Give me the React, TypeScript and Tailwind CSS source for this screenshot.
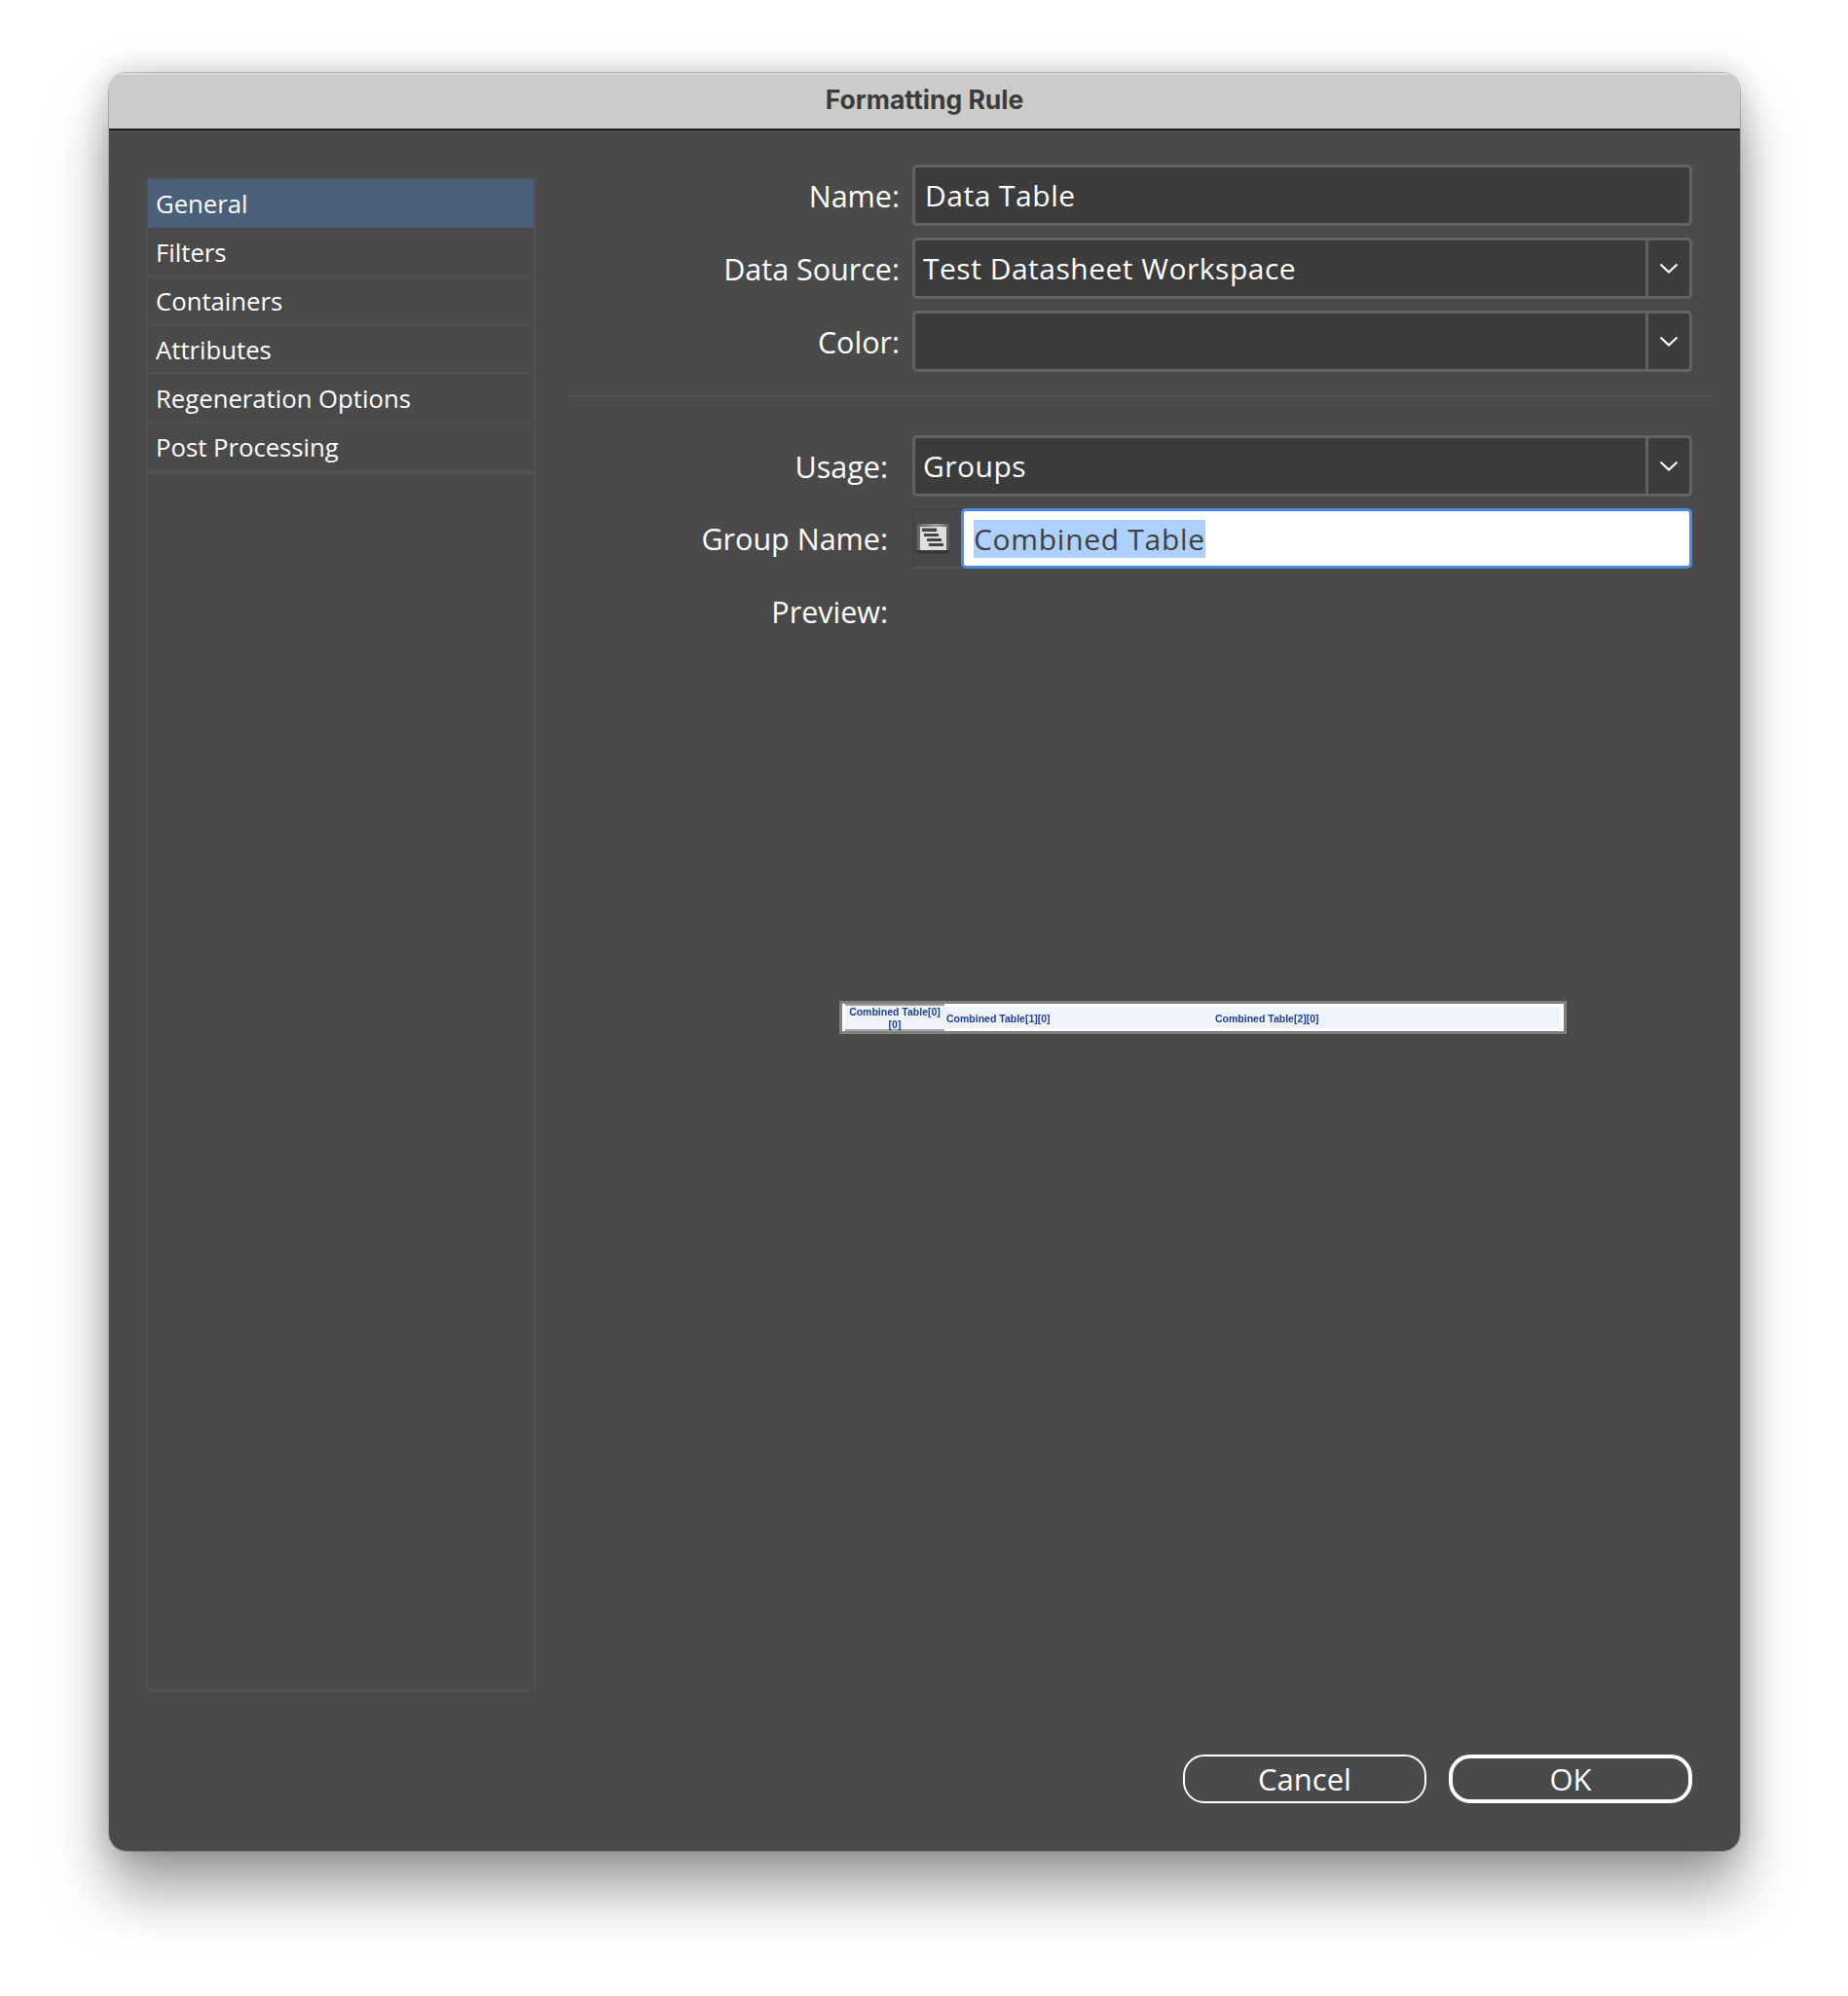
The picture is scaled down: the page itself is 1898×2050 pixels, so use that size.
const labelFont = "font-['Open_Sans','Noto_Sans',sans-serif]";

const sections = ['General', 'Filters', 'Containers', 'Attributes', 'Regeneration Options', 'Post Processing'];

const Chevron = () => (
  <svg width="20" height="12" viewBox="0 0 20 12" fill="none" stroke="white" strokeWidth="2.2">
    <path d="M1.5 1.5 L10 9.5 L18.5 1.5" />
  </svg>
);

const GroupIcon = () => (
  <svg width="33" height="31" viewBox="0 0 33 31">
    <defs>
      <linearGradient id="top" x1="0" x2="1" y1="0" y2="0">
        <stop offset="0" stopColor="#5c5c5c" />
        <stop offset="0.6" stopColor="#a0a0a0" />
        <stop offset="1" stopColor="#5c5c5c" />
      </linearGradient>
    </defs>
    <rect x="0" y="0" width="33" height="3" fill="url(#top)" />
    <rect x="0" y="3" width="3" height="24" fill="#6a6a6a" />
    <rect x="30" y="3" width="3" height="24" fill="#5c5c5c" />
    <rect x="0" y="27" width="33" height="4" fill="#383838" />
    <rect x="3" y="3" width="27" height="24" fill="#dedede" />
    <rect x="5" y="4.5" width="15" height="3.5" fill="#444" />
    <rect x="7" y="10" width="15" height="3" fill="#444" />
    <rect x="10" y="15" width="15" height="3" fill="#444" />
    <rect x="12" y="20" width="15" height="3" fill="#444" />
  </svg>
);

const Label = ({ text, wide }: { text: string; wide?: boolean }) => (
  <div className={`w-[352px] shrink-0 pt-[2px] text-right text-[30.5px] text-white ${wide ? 'pr-[13px]' : 'pr-[25px]'}`}>{text}</div>
);

const Select = ({ value }: { value: string }) => (
  <div className="flex h-[63px] flex-1 rounded-[5px] border-[3px] border-[#636363] bg-[#3c3c3c]">
    <div className="flex-1 pl-[8px] text-[30px] leading-[58px] tracking-[0.5px] text-white">{value}</div>
    <div className="flex w-[45px] items-center justify-center border-l-[3px] border-[#636363]">
      <Chevron />
    </div>
  </div>
);

const App = () => (
  <div className={`h-[2050px] bg-white pl-[112px] pt-[75px] ${labelFont}`}>
    <div className="flex h-[1826px] w-[1675px] flex-col overflow-hidden rounded-[18px] shadow-[0_42px_60px_rgba(0,0,0,0.36),0_0_32px_rgba(0,0,0,0.22),0_0_0_1px_rgba(0,0,0,0.2)]">
      <div className="flex h-[59px] shrink-0 items-center justify-center border-t-2 border-b-2 border-t-[#dcdcdc] border-b-[#1c1c1c] bg-[#cbcbc9] pb-[4px] font-['Inter',sans-serif] text-[26.5px] font-bold text-[#3b3b3b]">
        Formatting Rule
      </div>
      <div className="flex flex-1 flex-col bg-[#4a4a4a] pl-[38px]">
        <div className="flex flex-1">
          <div className="mt-[48px] flex h-[1555px] w-[400px] shrink-0 flex-col border-2 border-[#515151]">
            {sections.map((s, i) => (
              <div
                key={s}
                className={`flex h-[50px] items-center pl-[8px] text-[25.7px] text-white ${
                  i === 0 ? 'bg-[#4a6078] pt-[2px]' : 'border-b border-[#535353] pt-[3px]'
                }`}
              >
                {s}
              </div>
            ))}
            <div className="h-[3px] bg-[#535353]"></div>
          </div>
          <div className="ml-[35px] flex flex-1 flex-col pt-[35px]">
            <div className="flex flex-col gap-[12px] pr-[49px]">
              <div className="flex items-center">
                <Label text="Name:" wide />
                <div className="h-[63px] flex-1 rounded-[5px] border-[3px] border-[#636363] bg-[#3c3c3c] pl-[10px] text-[30px] leading-[57px] tracking-[0.5px] text-white">
                  Data Table
                </div>
              </div>
              <div className="flex items-center">
                <Label text="Data Source:" wide />
                <Select value="Test Datasheet Workspace" />
              </div>
              <div className="flex items-center">
                <Label text="Color:" wide />
                <Select value="" />
              </div>
            </div>
            <div className="mr-[24px] mt-[25px] h-[4px] border-y border-[#525252] bg-[#484848]"></div>
            <div className="mt-[36px] flex flex-col gap-[12px] pr-[49px]">
              <div className="flex items-center">
                <Label text="Usage:" />
                <Select value="Groups" />
              </div>
              <div className="flex items-center">
                <Label text="Group Name:" />
                <div className="flex h-[62px] w-[50px] shrink-0 items-center border-2 border-r-0 border-[#424242] border-b-[#555555] bg-[#484848] pl-[3px]">
                  <GroupIcon />
                </div>
                <div className="flex h-[62px] flex-1 items-center rounded-[5px] border-[3px] border-[#4a8ae0] bg-white pl-[10px] text-[30px] tracking-[0.7px] text-[#404040]">
                  <span className="inline-block bg-[#aed0fd] pt-[1px] leading-[38px]">Combined Table</span>
                </div>
              </div>
              <div className="flex items-center pt-[8px]">
                <Label text="Preview:" />
              </div>
            </div>
            <div className="ml-[277px] mt-[376px] flex h-[34px] w-[747px] border-[3px] border-[#808080] bg-white p-[3px] font-['Liberation_Sans',sans-serif] text-[10.5px] font-bold leading-[13px] text-[#1d3f8f]">
              <div className="-my-[3px] flex w-[102px] items-center justify-center border-y-2 border-[#a0a0a0] bg-[#f0f3f9] pt-[2px] text-center blur-[0.3px]">
                Combined Table[0]
                <br />
                [0]
              </div>
              <div className="flex w-[276px] items-center bg-[#f0f3f9] pl-[2px] pt-[3px] blur-[0.3px]">Combined Table[1][0]</div>
              <div className="flex flex-1 items-center bg-[#f0f3f9] pl-[2px] pt-[3px] blur-[0.3px]">Combined Table[2][0]</div>
            </div>
          </div>
        </div>
        <div className="mb-[49px] flex justify-end gap-[23px] pr-[49px]">
          <div className="flex h-[50px] w-[250px] items-center justify-center rounded-[22px] border-2 border-white text-[31px] text-white">
            Cancel
          </div>
          <div className="flex h-[50px] w-[250px] items-center justify-center rounded-[22px] border-4 border-white text-[31px] text-white">
            OK
          </div>
        </div>
      </div>
    </div>
  </div>
);

export default App;
